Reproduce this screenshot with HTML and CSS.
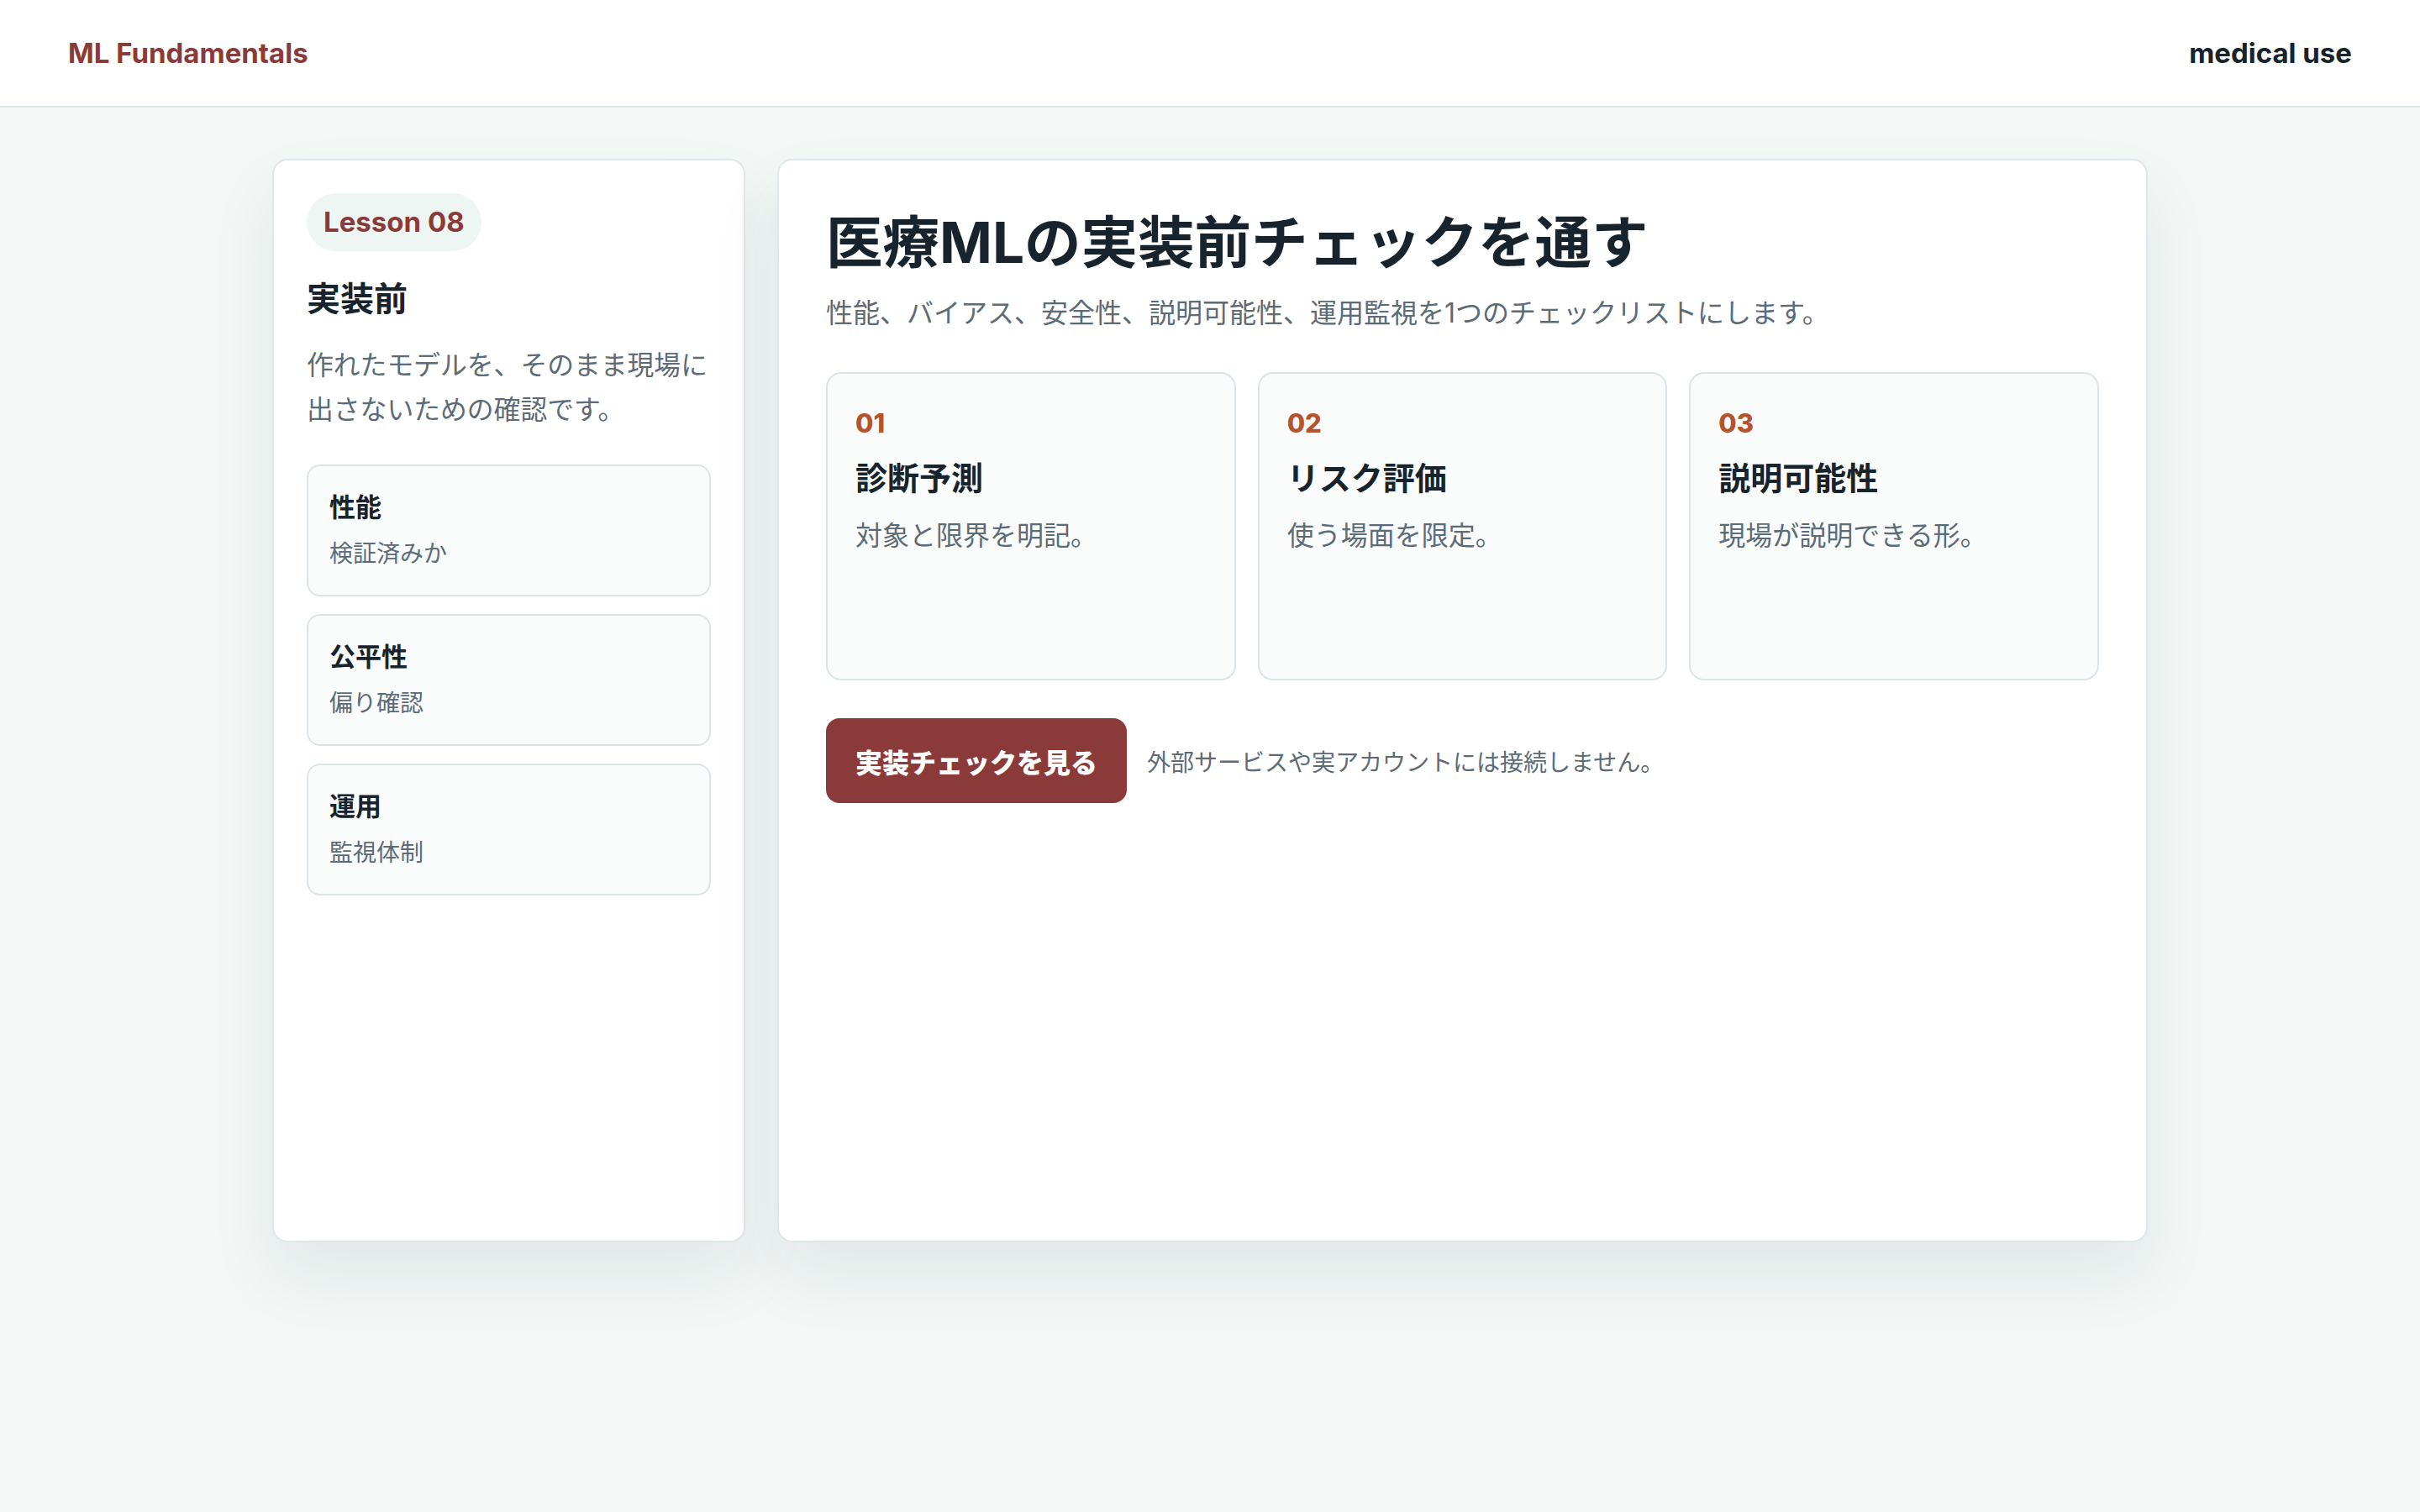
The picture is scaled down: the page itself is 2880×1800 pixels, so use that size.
FILE: index.html
```html
<!DOCTYPE html>
<html lang="ja">
<head>
    <meta charset="UTF-8">
    <title>ML Fundamentals - Lesson 08</title>
    <link rel="stylesheet" href="styles.css">
</head>
<body>
    <header class="topbar">
        <div class="brand">ML Fundamentals</div>
        <div class="topic">medical use</div>
    </header>
    <div class="page">
        <aside class="side card">
            <span class="pill">Lesson 08</span>
            <h2 class="side-title">実装前</h2>
            <p class="side-desc">作れたモデルを、そのまま現場に出さないための確認です。</p>
            <ul class="side-list">
                <li class="item">
                    <div class="item-title">性能</div>
                    <div class="item-sub">検証済みか</div>
                </li>
                <li class="item">
                    <div class="item-title">公平性</div>
                    <div class="item-sub">偏り確認</div>
                </li>
                <li class="item">
                    <div class="item-title">運用</div>
                    <div class="item-sub">監視体制</div>
                </li>
            </ul>
        </aside>
        <main class="main card">
            <h1 class="title">医療MLの実装前チェックを通す</h1>
            <p class="lead">性能、バイアス、安全性、説明可能性、運用監視を1つのチェックリストにします。</p>
            <div class="steps">
                <div class="step">
                    <div class="num">01</div>
                    <div class="step-title">診断予測</div>
                    <div class="step-desc">対象と限界を明記。</div>
                </div>
                <div class="step">
                    <div class="num">02</div>
                    <div class="step-title">リスク評価</div>
                    <div class="step-desc">使う場面を限定。</div>
                </div>
                <div class="step">
                    <div class="num">03</div>
                    <div class="step-title">説明可能性</div>
                    <div class="step-desc">現場が説明できる形。</div>
                </div>
            </div>
            <div class="actions">
                <button class="btn">実装チェックを見る</button>
                <span class="note">外部サービスや実アカウントには接続しません。</span>
            </div>
        </main>
    </div>
</body>
</html>
```

FILE: styles.css
```css
*{
    margin: 0;
    padding: 0;
    box-sizing: border-box;
}
body{
    font-family: Inter, "Noto Sans CJK JP", sans-serif;
    background-color: #f3f7f6;
    color: #17232d;
    min-height: 1800px;
}
.topbar{
    height: 128px;
    background-color: #fff;
    border-bottom: 2px solid #dde6e8;
    display: flex;
    align-items: center;
    justify-content: space-between;
    padding: 0 81px;
    font-size: 33px;
    font-weight: 700;
}
.brand{
    color: #8b3a3a;
}
.topic{
    color: #17232d;
}
.page{
    width: 2232px;
    margin: 61px auto 0;
    display: grid;
    grid-template-columns: 563px 1fr;
    gap: 38px;
}
.card{
    background-color: #fff;
    border: 2px solid #dfe7ea;
    border-radius: 18px;
    box-shadow: 0 40px 80px rgba(30, 60, 60, 0.08);
    min-height: 1290px;
}
/* 左侧 */
.side{
    padding: 39px 39px 39px 39px;
}
.pill{
    display: inline-block;
    height: 69px;
    line-height: 69px;
    padding: 0 20px;
    border-radius: 35px;
    background-color: #edf6f3;
    color: #8b3a3a;
    font-size: 33px;
    font-weight: 700;
}
.side-title{
    margin-top: 31px;
    font-size: 40px;
    line-height: 52px;
    font-weight: 700;
}
.side-desc{
    margin-top: 26px;
    font-size: 31.8px;
    line-height: 53px;
    color: #5b6b77;
}
.side-list{
    list-style: none;
    margin-top: 39px;
    display: flex;
    flex-direction: column;
    gap: 21px;
}
.item{
    background-color: #fafcfc;
    border: 2px solid #dbe5e8;
    border-radius: 16px;
    padding: 29px 25px;
}
.item-title{
    font-size: 31px;
    line-height: 40px;
    font-weight: 700;
}
.item-sub{
    margin-top: 15px;
    font-size: 28px;
    line-height: 40px;
    color: #5b6b77;
}
/* 右侧 */
.main{
    padding: 58px 56px;
}
.title{
    font-size: 67.5px;
    line-height: 80px;
    font-weight: 700;
}
.lead{
    margin-top: 20px;
    font-size: 32px;
    line-height: 48px;
    color: #5b6b77;
}
.steps{
    margin-top: 46px;
    display: grid;
    grid-template-columns: repeat(3, 1fr);
    gap: 26px;
}
.step{
    background-color: #fafcfc;
    border: 2px solid #dbe5e8;
    border-radius: 18px;
    height: 367px;
    padding: 41px 33px 35px;
}
.num{
    font-size: 31px;
    line-height: 36px;
    font-weight: 800;
    color: #b5532c;
}
.step-title{
    margin-top: 21px;
    font-size: 38px;
    line-height: 52px;
    font-weight: 700;
}
.step-desc{
    margin-top: 21px;
    font-size: 32px;
    line-height: 44px;
    color: #5b6b77;
}
.actions{
    margin-top: 45px;
    display: flex;
    align-items: center;
    gap: 24px;
}
.btn{
    height: 101px;
    padding: 0 35px;
    border: none;
    border-radius: 16px;
    background-color: #8b3a3a;
    color: #fff;
    font-family: Inter, "Noto Sans CJK JP", sans-serif;
    font-size: 32px;
    font-weight: 900;
    cursor: pointer;
}
.note{
    font-size: 28px;
    color: #5b6b77;
}
```
